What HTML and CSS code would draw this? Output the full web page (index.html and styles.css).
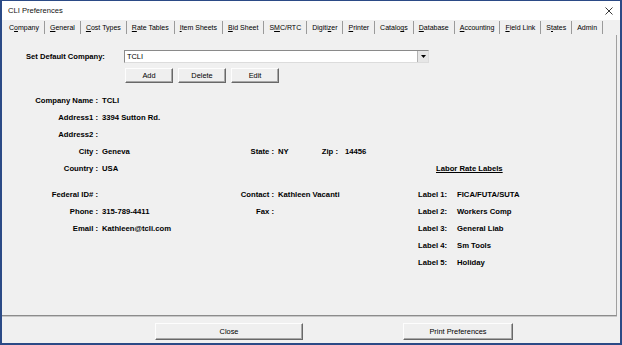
FILE: index.html
```html
<!DOCTYPE html>
<html lang="en">

<head>
    <meta charset="UTF-8">
    <title>CLI Preferences</title>
    <link rel="stylesheet" href="styles.css">
</head>

<body>
    <div class="window">
        <div class="titlebar">
            <span class="title">CLI Preferences</span>
            <svg class="close-x" width="8" height="8" viewBox="0 0 8 8">
                <path d="M0.5 0.5 L7.5 7.5 M7.5 0.5 L0.5 7.5" stroke="#222" stroke-width="0.9" fill="none" />
            </svg>
        </div>

        <div class="tabs">
            <span class="tab active">C<u>o</u>mpany</span>
            <span class="tab"><u>G</u>eneral</span>
            <span class="tab"><u>C</u>ost Types</span>
            <span class="tab"><u>R</u>ate Tables</span>
            <span class="tab"><u>I</u>tem Sheets</span>
            <span class="tab"><u>B</u>id Sheet</span>
            <span class="tab">S<u>M</u>C/RTC</span>
            <span class="tab">Digiti<u>z</u>er</span>
            <span class="tab"><u>P</u>rinter</span>
            <span class="tab">Catalo<u>g</u>s</span>
            <span class="tab"><u>D</u>atabase</span>
            <span class="tab"><u>A</u>ccounting</span>
            <span class="tab"><u>F</u>ield Link</span>
            <span class="tab">S<u>t</u>ates</span>
            <span class="tab">Admin</span>
        </div>

        <div class="panel">
            <div class="default-row">
                <span class="default-label">Set Default Company:</span>
                <div class="combo">
                    <span class="combo-text">TCLI</span>
                    <span class="combo-drop">
                        <svg width="5" height="3" viewBox="0 0 5 3"><path d="M0 0 H5 L2.5 3 Z" fill="#000" /></svg>
                    </span>
                </div>
            </div>

            <div class="btn-row">
                <button class="btn small">Add</button>
                <button class="btn small">Delete</button>
                <button class="btn small">Edit</button>
            </div>

            <!-- company info, contact and labor labels -->
            <div class="info">
                <span class="lbl">Company Name :</span>
                <span class="val">TCLI</span>

                <span class="lbl">Address1 :</span>
                <span class="val">3394 Sutton Rd.</span>

                <span class="lbl">Address2 :</span>

                <span class="lbl">City :</span>
                <span class="val">Geneva</span>
                <span class="lbl mid">State :</span>
                <span class="val">NY</span>
                <span class="lbl zip">Zip :</span>
                <span class="val zip-val">14456</span>

                <span class="lbl">Country :</span>
                <span class="val">USA</span>
                <span class="labor-head">Labor Rate Labels</span>

                <span class="spacer"></span>

                <span class="lbl">Federal ID# :</span>
                <span class="lbl mid">Contact :</span>
                <span class="val contact">Kathleen Vacanti</span>
                <span class="lab">Label 1:</span>
                <span class="lab-val">FICA/FUTA/SUTA</span>

                <span class="lbl">Phone :</span>
                <span class="val">315-789-4411</span>
                <span class="lbl mid">Fax :</span>
                <span class="lab">Label 2:</span>
                <span class="lab-val">Workers Comp</span>

                <span class="lbl">Email :</span>
                <span class="val">Kathleen@tcli.com</span>
                <span class="lab">Label 3:</span>
                <span class="lab-val">General Liab</span>

                <span class="lab">Label 4:</span>
                <span class="lab-val">Sm Tools</span>

                <span class="lab">Label 5:</span>
                <span class="lab-val">Holiday</span>
            </div>
        </div>

        <div class="footer">
            <button class="btn close-btn">Close</button>
            <button class="btn print-btn">Print Preferences</button>
        </div>
    </div>
</body>

</html>
```

FILE: styles.css
```css
* {
    box-sizing: border-box;
}

body {
    margin: 0;
    padding: 0;
    font-family: "Liberation Sans", Arial, sans-serif;
    color: #000;
}

.window {
    width: 622px;
    height: 345px;
    background-color: #f0f0f0;
    border: 2px solid #2b4a86;
    border-top: 1px solid #2b4a86;
    display: flex;
    flex-direction: column;
}

.titlebar {
    height: 19px;
    background-color: #fff;
    display: flex;
    align-items: center;
    justify-content: space-between;
    padding: 0 7px 0 6px;
}

.title {
    font-size: 7.6px;
    color: #111;
}

.close-x {
    display: block;
}

.tabs {
    height: 15px;
    display: flex;
    align-items: center;
    padding-left: 1px;
}

.tab {
    font-size: 7px;
    padding: 0 5px;
    height: 13px;
    line-height: 13px;
    border-right: 1px solid #9a9a9a;
    white-space: nowrap;
}

.tab.active {
    padding-left: 6px;
}

.tab u {
    text-decoration-thickness: 1px;
}

.panel {
    flex: 1;
    margin-right: 3px;
    border-right: 1px solid #a0a0a0;
    border-bottom: 1px solid #8c8c8c;
    box-shadow: 0 1px 0 #c8c8c8;
}

.default-row {
    display: flex;
    align-items: center;
    margin-top: 15px;
    padding-left: 24px;
}

.default-label {
    width: 98px;
    font-size: 7.6px;
    font-weight: bold;
}

.combo {
    width: 305px;
    height: 13px;
    background-color: #fff;
    border: 1px solid;
    border-color: #8a8a8a #dcdcdc #dcdcdc #8a8a8a;
    display: flex;
    align-items: center;
    justify-content: space-between;
}

.combo-text {
    font-size: 7.4px;
    padding-left: 2px;
}

.combo-drop {
    width: 11px;
    height: 11px;
    background-color: #e6e6e6;
    border-left: 1px solid #b4b4b4;
    display: flex;
    align-items: center;
    justify-content: center;
}

.btn-row {
    display: flex;
    gap: 5px;
    margin: 5px 0 0 123px;
}

.btn {
    font-family: "Liberation Sans", Arial, sans-serif;
    font-size: 7.4px;
    color: #000;
    background-color: #efefef;
    border: 1px solid;
    border-color: #fdfdfd #686868 #686868 #fdfdfd;
    box-shadow: inset -1px -1px 0 #a8a8a8;
    padding: 0;
}

.btn.small {
    width: 48px;
    height: 15px;
}

.info {
    margin-top: 9px;
    display: grid;
    grid-template-columns: 96px 137px 39px 44px 22px 76px 39px auto;
    grid-template-rows: repeat(5, 17px) 9px;
    grid-auto-rows: 17px;
    align-items: center;
    font-size: 7.7px;
    font-weight: bold;
    white-space: nowrap;
}

.lbl {
    grid-column: 1;
    text-align: right;
}

.lbl.mid {
    grid-column: 3;
}

.lbl.zip {
    grid-column: 5;
    padding-right: 2px;
}

.val {
    padding-left: 4px;
}

.val.contact {
    grid-column: 4 / 7;
}

.val.zip-val {
    padding-left: 5px;
}

.labor-head {
    grid-column: 7 / 9;
    padding-left: 20px;
    text-decoration: underline;
}

.spacer {
    grid-column: 1 / -1;
}

.lab {
    grid-column: 7;
    padding-left: 2px;
}

.lab-val {
    padding-left: 2px;
}

.footer {
    flex: none;
    height: 27px;
    display: flex;
    align-items: flex-start;
    gap: 100px;
    padding: 7px 0 0 153px;
}

.close-btn {
    width: 148px;
    height: 17px;
}

.print-btn {
    width: 110px;
    height: 17px;
}
```
